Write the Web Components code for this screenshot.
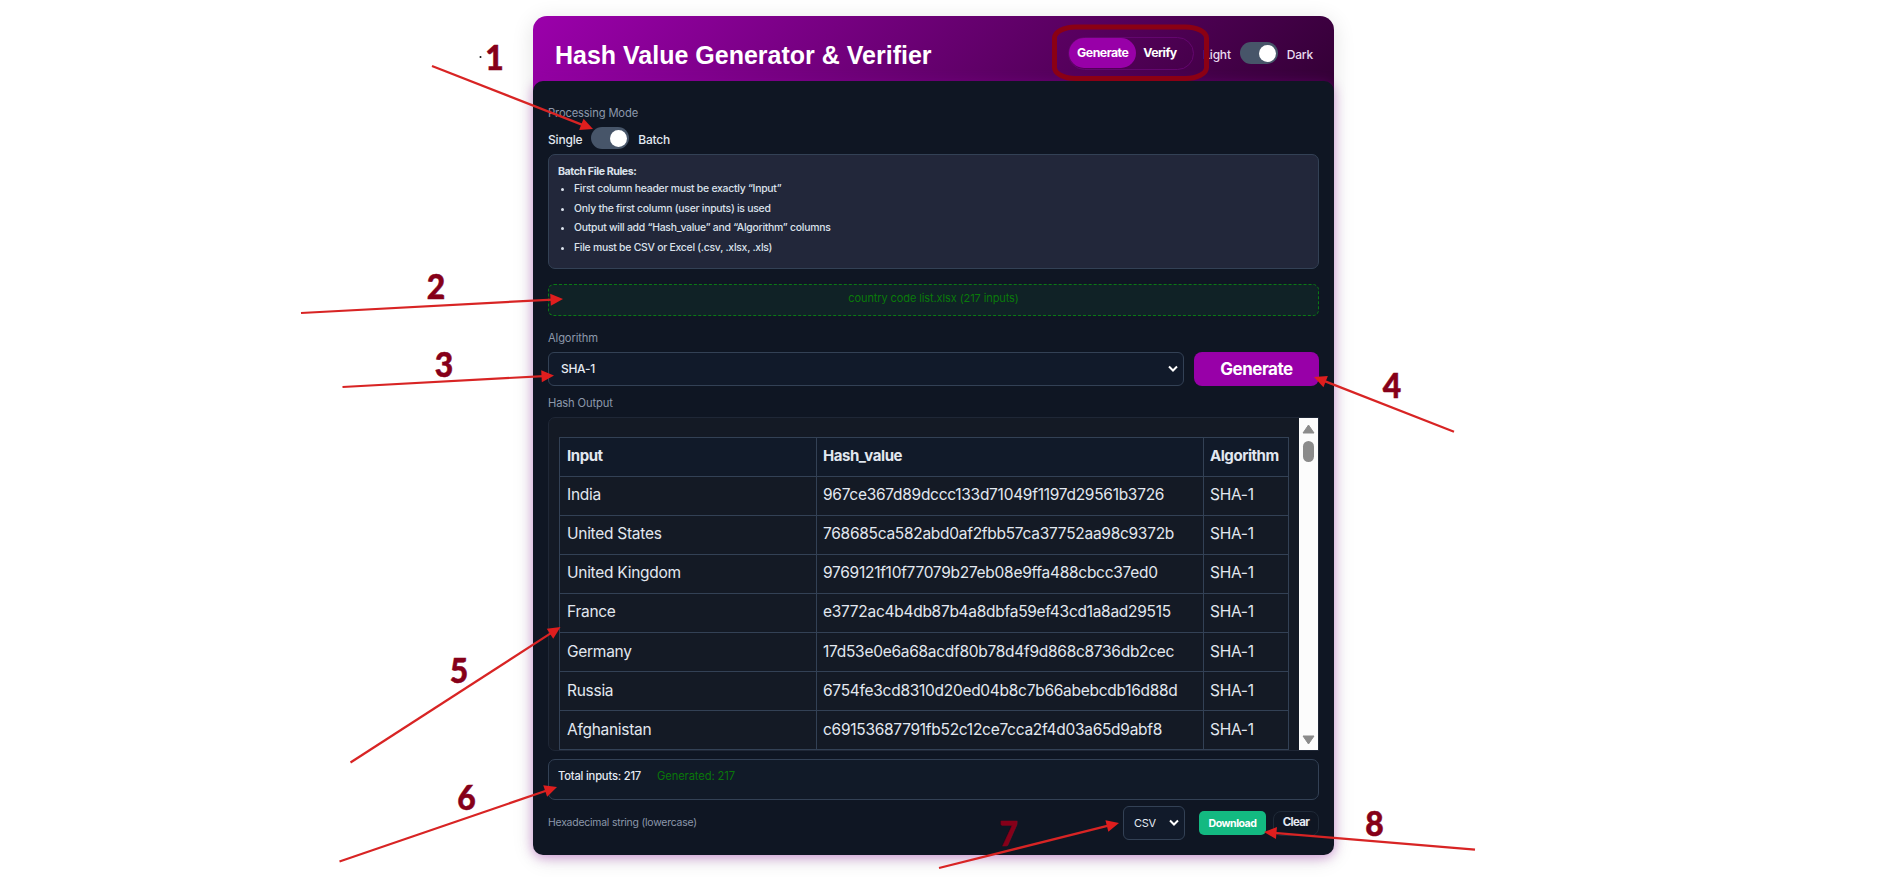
<!DOCTYPE html>
<html lang="en">
<head>
<meta charset="utf-8">
<title>Hash Value Generator & Verifier</title>
<style>
    body {
        margin: 0;
        width: 1882px;
        height: 877px;
        overflow: hidden;
        background: #fff;
        font-family: Inter, "Liberation Sans", sans-serif;
    }
</style>
</head>
<body>
<hash-app></hash-app>

<script>
function define(name, html, setup) {
    const template = document.createElement('template');
    template.innerHTML = html;

    customElements.define(name, class extends HTMLElement {
        constructor() {
            super();
            this.attachShadow({mode: "open"}).append(template.content.cloneNode(true));
            if (setup) setup(this.shadowRoot, this);
        }
    });
}

define('toggle-switch', `
<style>
    :host {
        display: flex;
        align-items: center;
        gap: 9px;
        font-size: 12px;
        font-weight: 500;
        line-height: 16px;
        letter-spacing: -0.2px;
        color: #e2e8f0;
    }

    span {
        padding-top: 3px;
    }

    .track {
        display: flex;
        justify-content: flex-end;
        align-items: center;
        box-sizing: border-box;
        width: 38px;
        height: 22px;
        padding-right: 2px;
        border-radius: 11px;
        background: #475569;
    }

    .knob {
        width: 17px;
        height: 17px;
        border-radius: 50%;
        background: #fff;
    }
</style>
<span><slot name="off"></slot></span>
<div class="track"><div class="knob"></div></div>
<span><slot name="on"></slot></span>
`);

define('tab-group', `
<style>
    :host {
        display: flex;
        box-sizing: border-box;
        width: 126px;
        height: 33px;
        border: 1px solid #64066f;
        border-radius: 17px;
        color: #fff;
        font-size: 12.3px;
        font-weight: 700;
        line-height: 30px;
        letter-spacing: -0.5px;
    }

    .active {
        width: 67px;
        height: 30px;
        border-radius: 15px;
        background: #9800a8;
        text-align: center;
    }

    .tab {
        padding-left: 7px;
    }
</style>
<div class="active"><slot name="active"></slot></div>
<div class="tab"><slot></slot></div>
`);

define('app-header', `
<style>
    :host {
        display: flex;
        align-items: center;
        box-sizing: border-box;
        height: 80px;
        padding: 0 21px 6px 22px;
        border-radius: 14px 14px 0 0;
        background: linear-gradient(135deg, #9b00ab 0%, #320034 100%);
    }

    h1 {
        flex: 1;
        margin: 0;
        color: #fff;
        font: 700 25px/30px "Liberation Sans", Arial, sans-serif;
        white-space: nowrap;
        padding-top: 3px;
    }

    toggle-switch {
        margin-left: 9px;
        color: #eadcf0;
    }
</style>
<h1><slot></slot></h1>
<tab-group><span slot="active">Generate</span>Verify</tab-group>
<toggle-switch><span slot="off">Light</span><span slot="on">Dark</span></toggle-switch>
`);

define('field-label', `
<style>
    :host {
        display: block;
        height: 16px;
        color: #8c98ab;
        font-size: 11.2px;
        line-height: 16px;
        letter-spacing: -0.14px;
    }
</style>
<slot></slot>
`);

define('batch-rules', `
<style>
    :host {
        display: block;
        box-sizing: border-box;
        height: 115px;
        padding: 9px 9px;
        border: 1px solid #334155;
        border-radius: 7px;
        background: #22273a;
        color: #dbe2ec;
        font-size: 10.4px;
        font-weight: 500;
        letter-spacing: -0.25px;
    }

    b {
        display: block;
        height: 15px;
        font-size: 10.6px;
        line-height: 16px;
        letter-spacing: -0.4px;
    }

    ul {
        margin: 0;
        padding-left: 16px;
    }

    li {
        line-height: 19.7px;
    }
</style>
<b>Batch File Rules:</b>
<ul>
    <li>First column header must be exactly “Input”</li>
    <li>Only the first column (user inputs) is used</li>
    <li>Output will add “Hash_value” and “Algorithm” columns</li>
    <li>File must be CSV or Excel (.csv, .xlsx, .xls)</li>
</ul>
`);

define('drop-zone', `
<style>
    :host {
        display: block;
        box-sizing: border-box;
        height: 32px;
        border: 1px dashed #0a7a14;
        border-radius: 6px;
        background: #102226;
        color: #0a7a0a;
        font-size: 11px;
        line-height: 26px;
        letter-spacing: -0.1px;
        text-align: center;
    }
</style>
<slot></slot>
`);

define('select-box', `
<style>
    :host {
        display: flex;
        align-items: center;
        justify-content: space-between;
        box-sizing: border-box;
        height: 34px;
        padding: 0 4px 1px 12px;
        border: 1px solid #334155;
        border-radius: 6px;
        background: #111a2a;
        color: #e5eaf2;
        font-size: 12px;
        font-weight: 500;
        line-height: 16px;
        letter-spacing: -0.3px;
    }
</style>
<slot></slot>
<svg width="12" height="8" viewBox="0 0 12 8"><path d="M2 1.5 6 5.5 10 1.5" fill="none" stroke="#fff" stroke-width="2"/></svg>
`);

define('action-button', `
<style>
    :host {
        display: block;
        box-sizing: border-box;
        width: 125px;
        height: 34px;
        border-radius: 8px;
        background: #9800a8;
        color: #fff;
        font-size: 17px;
        font-weight: 700;
        line-height: 35px;
        letter-spacing: -0.5px;
        text-align: center;
    }

    :host([kind="download"]) {
        width: 67px;
        height: 24px;
        border-radius: 5px;
        background: #13b981;
        font-size: 10.6px;
        line-height: 25px;
    }

    :host([kind="clear"]) {
        width: 46px;
        height: 25px;
        border: 1px solid #1f2937;
        background: none;
        color: #e5eaf2;
        font-size: 11.4px;
        line-height: 20px;
        letter-spacing: -0.65px;
    }
</style>
<slot></slot>
`);

const rows = [
    ["India", "967ce367d89dccc133d71049f1197d29561b3726"],
    ["United States", "768685ca582abd0af2fbb57ca37752aa98c9372b"],
    ["United Kingdom", "9769121f10f77079b27eb08e9ffa488cbcc37ed0"],
    ["France", "e3772ac4b4db87b4a8dbfa59ef43cd1a8ad29515"],
    ["Germany", "17d53e0e6a68acdf80b78d4f9d868c8736db2cec"],
    ["Russia", "6754fe3cd8310d20ed04b8c7b66abebcdb16d88d"],
    ["Afghanistan", "c69153687791fb52c12ce7cca2f4d03a65d9abf8"]
];

define('hash-table', `
<style>
    :host {
        display: flex;
        justify-content: space-between;
        box-sizing: border-box;
        height: 334px;
        overflow: hidden;
        border: 1px solid #1f2736;
        border-radius: 7px 0 0 7px;
        background: #141a25;
        color: #e2e8f0;
    }

    table {
        table-layout: fixed;
        width: 730px;
        height: 313px;
        margin: 19px 0 0 10px;
        border-collapse: collapse;
        font-size: 15.5px;
        letter-spacing: -0.28px;
    }

    th, td {
        box-sizing: border-box;
        height: 39px;
        padding: 0 6px 3px;
        border: 1px solid #334155;
        text-align: left;
        white-space: nowrap;
        line-height: 20px;
    }

    th:first-child, td:first-child {
        padding-left: 7px;
    }

    tr:nth-child(n+5) td {
        padding-bottom: 1px;
    }

    th {
        background: #111a29;
        font-size: 15px;
        letter-spacing: -0.45px;
    }

    .scroll {
        display: flex;
        flex-direction: column;
        align-items: center;
        width: 19px;
        background: #fcfcfc;
    }

    .thumb {
        width: 11px;
        height: 21px;
        margin-top: 7px;
        border-radius: 6px;
        background: #8b8b8b;
    }

    .up {
        margin-top: 6px;
    }

    .down {
        margin: auto 0 5px;
    }
</style>
<table>
    <colgroup><col style="width: 257px"><col style="width: 387px"><col style="width: 85px"></colgroup>
    <thead><tr><th>Input</th><th>Hash_value</th><th>Algorithm</th></tr></thead>
    <tbody></tbody>
</table>
<div class="scroll">
    <svg class="up" width="13" height="10"><path d="M6.5 1 12 9H1Z" fill="#8b8b8b" stroke="#8b8b8b" stroke-linejoin="round"/></svg>
    <div class="thumb"></div>
    <svg class="down" width="13" height="10"><path d="M6.5 9 12 1H1Z" fill="#8b8b8b" stroke="#8b8b8b" stroke-linejoin="round"/></svg>
</div>
`, root => {
    root.querySelector('tbody').innerHTML = rows.map(r =>
        `<tr><td>${r[0]}</td><td>${r[1]}</td><td>SHA-1</td></tr>`).join('');
});

define('batch-status', `
<style>
    :host {
        display: flex;
        gap: 16px;
        box-sizing: border-box;
        height: 41px;
        padding: 8px 9px;
        border: 1px solid #334155;
        border-radius: 7px;
        background: #111a28;
        color: #e5eaf2;
        font-size: 11.2px;
        font-weight: 500;
        line-height: 16px;
        letter-spacing: -0.2px;
    }

    .done {
        color: #0a760a;
        font-weight: 400;
        letter-spacing: -0.12px;
    }
</style>
<span>Total inputs: 217</span>
<span class="done">Generated: 217</span>
`);

// numbered arrows: digit, digit centre and baseline, arrow tail and tip
const marks = [
    [1, 494.5, 69.5, 432, 66, 593, 129],
    [2, 436, 299, 301, 313, 563, 299],
    [3, 444, 377, 342.5, 387, 554, 375.5],
    [4, 1392, 398, 1454, 431.7, 1314, 377],
    [5, 459, 683, 350.5, 762.5, 560.5, 627],
    [6, 466.5, 810, 339.5, 861.5, 557, 787],
    [7, 1008.5, 846, 939, 868, 1119, 823],
    [8, 1374.5, 836, 1475, 849.7, 1264, 832]
];

define('guide-marks', `
<style>
    :host {
        position: absolute;
        top: 0;
        left: 0;
    }

    svg {
        display: block;
    }

    text {
        fill: #860019;
        stroke: #860019;
        stroke-width: 0.5px;
        font: 900 34px Lato, "Liberation Sans", sans-serif;
    }
</style>
<svg width="1882" height="877"></svg>
`, root => {
    let shapes = '<rect x="1054.5" y="27" width="152" height="51.5" rx="21" ry="11" fill="none" stroke="#8b0014" stroke-width="5"/>'
        + '<circle cx="480.5" cy="57" r="1" fill="#111"/>';
    for (const [n, cx, base, x1, y1, x2, y2] of marks) {
        const len = Math.hypot(x2 - x1, y2 - y1);
        const angle = Math.atan2(y2 - y1, x2 - x1) * 180 / Math.PI;
        shapes += `<g transform="translate(${x2} ${y2}) rotate(${angle})" fill="#df1e1e">
            <path d="M${-len} 0H-10" stroke="#d82424" stroke-width="2.2"/>
            <path d="M0 0-12.5-6V6Z"/></g>
            <text x="${cx - 9.25}" y="${base}" textLength="18.5" lengthAdjust="spacingAndGlyphs">${n}</text>`;
    }
    root.querySelector('svg').innerHTML = shapes;
});

define('hash-app', `
<style>
    :host {
        display: block;
        padding-top: 16px;
    }

    .card {
        width: 801px;
        height: 839px;
        margin-left: 533px;
        border-radius: 14px;
        box-shadow: 0 4px 22px rgba(0, 0, 0, 0.12);
    }

    .panel {
        box-sizing: border-box;
        height: 774px;
        margin-top: -15px;
        padding: 24px 15px 0;
        border-radius: 10px;
        background: #0f1623;
        box-shadow: 0 2px 12px rgba(152, 0, 168, 0.38);
    }

    .mode {
        margin: 6px 0 5px;
    }

    drop-zone {
        margin: 15px 0 14px;
    }

    .algorithm {
        display: flex;
        justify-content: space-between;
        margin: 6px 0 9px;
    }

    .algorithm select-box {
        width: 636px;
    }

    hash-table {
        margin: 6px 0 8px;
    }

    footer {
        display: flex;
        align-items: center;
        height: 34px;
        margin-top: 6px;
    }

    footer field-label {
        flex: 1;
        font-size: 10.4px;
        letter-spacing: -0.2px;
    }

    footer select-box {
        width: 62px;
        margin-right: 14px;
        padding-left: 10px;
        font-size: 11px;
        font-weight: 400;
    }

    footer action-button + action-button {
        margin-left: 7px;
    }
</style>
<div class="card">
    <app-header>Hash Value Generator &amp; Verifier</app-header>
    <div class="panel">
        <field-label>Processing Mode</field-label>
        <toggle-switch class="mode"><span slot="off">Single</span><span slot="on">Batch</span></toggle-switch>
        <batch-rules></batch-rules>
        <drop-zone>country code list.xlsx (217 inputs)</drop-zone>
        <field-label>Algorithm</field-label>
        <div class="algorithm">
            <select-box>SHA-1</select-box>
            <action-button>Generate</action-button>
        </div>
        <field-label>Hash Output</field-label>
        <hash-table></hash-table>
        <batch-status></batch-status>
        <footer>
            <field-label>Hexadecimal string (lowercase)</field-label>
            <select-box>CSV</select-box>
            <action-button kind="download">Download</action-button>
            <action-button kind="clear">Clear</action-button>
        </footer>
    </div>
</div>
<guide-marks></guide-marks>
`);
</script>
</body>
</html>
